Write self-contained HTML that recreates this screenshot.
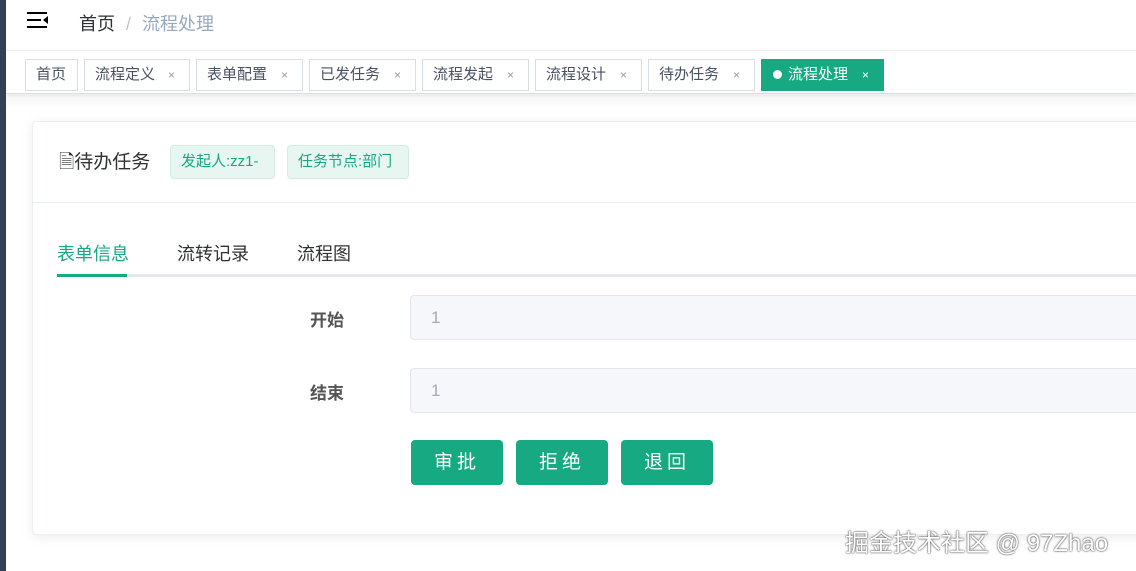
<!DOCTYPE html><html><head><meta charset="utf-8"><style>
*{box-sizing:border-box;margin:0;padding:0}
body{width:1136px;height:571px;overflow:hidden;background:#fff;font-family:"Liberation Sans","Noto Sans CJK SC",sans-serif;position:relative}
.side{position:absolute;left:0;top:0;width:6px;height:571px;background:#304156}
.nav{position:absolute;left:6px;top:0;right:0;height:50px;background:#fff}
.tags{position:absolute;left:6px;top:50px;right:0;height:44px;border-top:1px solid #eee;border-bottom:1px solid #d8dce5;box-shadow:0 1px 3px rgba(0,0,0,.1);background:#fff}
.tag{position:absolute;top:8px;height:32px;border:1px solid #d8dce5;font-size:15px;color:#495060;line-height:30px;padding-left:10px}
.tag i{font-style:normal;font-size:12px;color:#999;position:absolute;right:14px}
.main{position:absolute;left:6px;top:95px;right:0;height:14px;background:linear-gradient(#f5f5f5,#fff)}
.card{position:absolute;left:32px;top:121px;width:1120px;height:414px;background:#fff;border:1px solid #ebeef5;border-radius:4px;box-shadow:0 2px 12px rgba(0,0,0,.08)}
.chip{position:absolute;top:145px;height:34px;background:#e8f6f2;border:1px solid #d0ede4;border-radius:4px;color:#16a982;font-size:15px;line-height:32px;padding:0 10px}
.lbl{position:absolute;left:310px;font-size:17px;font-weight:bold;color:#555}
.inp{position:absolute;left:410px;width:740px;height:45px;background:#f5f7fa;border:1px solid #e4e7ed;border-radius:4px;color:#a8abb2;font-size:17px;line-height:43px;padding-left:20px}
.btn{position:absolute;top:440px;width:92px;height:45px;background:#16a982;border-radius:4px;color:#fff;font-size:19px;line-height:45px;text-align:center;letter-spacing:4px}
</style></head><body>
<div class="main"></div>
<div class="side"></div>
<div class="nav">
<svg style="position:absolute;left:21px;top:12px" width="22" height="18"><rect x="0" y="0" width="20" height="2"/><rect x="0" y="7" width="14" height="2"/><rect x="0" y="14" width="20" height="2"/><path d="M21 4 L16 8 L21 12Z"/></svg>
<div style="position:absolute;left:73px;top:10px;font-size:18px;color:#303133">首页 <span style="color:#c0c4cc;margin:0 6px">/</span> <span style="color:#97a8be">流程处理</span></div>
</div>
<div class="tags">
<div class="tag" style="left:19px;width:53px">首页</div>
<div class="tag" style="left:78px;width:106px">流程定义<i>×</i></div>
<div class="tag" style="left:190px;width:107px">表单配置<i>×</i></div>
<div class="tag" style="left:303px;width:107px">已发任务<i>×</i></div>
<div class="tag" style="left:416px;width:107px">流程发起<i>×</i></div>
<div class="tag" style="left:529px;width:107px">流程设计<i>×</i></div>
<div class="tag" style="left:642px;width:107px">待办任务<i>×</i></div>
<div class="tag" style="left:755px;width:123px;background:#16a982;border-color:#16a982;color:#fff;padding-left:11px"><span style="display:inline-block;width:9px;height:9px;border-radius:50%;background:#fff;margin-right:6px"></span>流程处理<i style="color:#fff">×</i></div>
</div>
<div class="card"></div>
<div style="position:absolute;left:32px;top:202px;width:1104px;height:1px;background:#ebeef5"></div>
<div style="position:absolute;left:59px;top:147px;font-size:19px;color:#303133">🗎待办任务</div>
<div class="chip" style="left:170px;width:105px">发起人:zz1-</div>
<div class="chip" style="left:287px;width:122px">任务节点:部门</div>
<div style="position:absolute;left:57px;top:240px;font-size:18px;color:#16a982">表单信息</div>
<div style="position:absolute;left:177px;top:240px;font-size:18px;color:#303133">流转记录</div>
<div style="position:absolute;left:297px;top:240px;font-size:18px;color:#303133">流程图</div>
<div style="position:absolute;left:57px;top:274px;width:1079px;height:3px;background:#e4e7ed"></div>
<div style="position:absolute;left:57px;top:274px;width:70px;height:3px;background:#16a982"></div>
<div class="lbl" style="top:306px">开始</div>
<div class="inp" style="top:295px">1</div>
<div class="lbl" style="top:379px">结束</div>
<div class="inp" style="top:368px">1</div>
<div class="btn" style="left:411px">审批</div>
<div class="btn" style="left:516px">拒绝</div>
<div class="btn" style="left:621px">退回</div>
<div style="position:absolute;left:845px;top:523px;font-size:24px;color:#fff;text-shadow:0 0 2px #555,0 0 1px #333;white-space:nowrap">掘金技术社区 @ 97Zhao</div>
</body></html>
